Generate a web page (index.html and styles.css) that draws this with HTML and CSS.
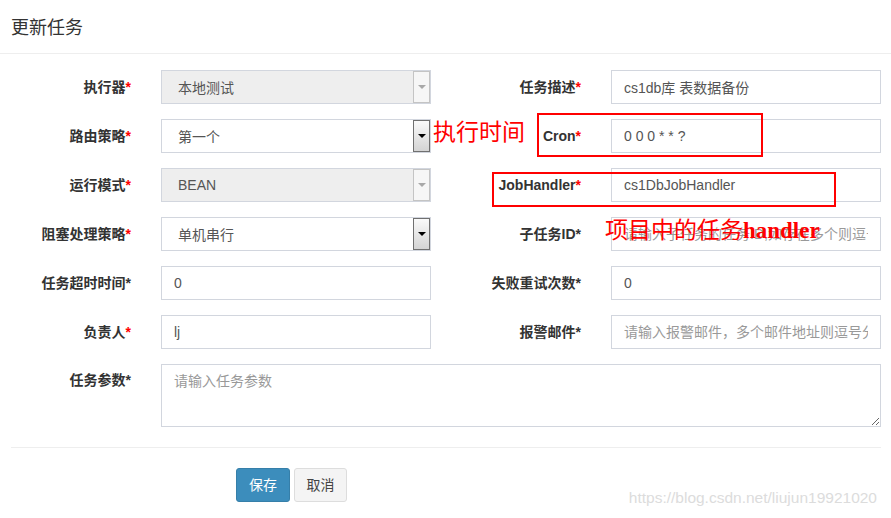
FILE: index.html
```html
<!DOCTYPE html>
<html lang="zh-CN">
<head>
  <meta charset="UTF-8">
  <title>更新任务</title>
  <link rel="stylesheet" href="styles.css">
</head>
<body>
  <div class="modal-header">
    <h4 class="modal-title">更新任务</h4>
  </div>

  <div class="modal-body">
    <form class="update-form">
      <div class="form-group">
        <label>执行器<span class="req">*</span></label>
        <div class="cell">
          <div class="select disabled"><span>本地测试</span><span class="arrow"></span></div>
        </div>
        <label>任务描述<span class="req">*</span></label>
        <div class="cell">
          <input type="text" value="cs1db库 表数据备份">
        </div>
      </div>

      <div class="form-group">
        <label>路由策略<span class="req">*</span></label>
        <div class="cell">
          <div class="select"><span>第一个</span><span class="arrow"></span></div>
        </div>
        <label>Cron<span class="req">*</span></label>
        <div class="cell">
          <input type="text" value="0 0 0 * * ?">
        </div>
      </div>

      <div class="form-group">
        <label>运行模式<span class="req">*</span></label>
        <div class="cell">
          <div class="select disabled"><span>BEAN</span><span class="arrow"></span></div>
        </div>
        <label>JobHandler<span class="req">*</span></label>
        <div class="cell">
          <input type="text" value="cs1DbJobHandler">
        </div>
      </div>

      <div class="form-group">
        <label>阻塞处理策略<span class="req">*</span></label>
        <div class="cell">
          <div class="select"><span>单机串行</span><span class="arrow"></span></div>
        </div>
        <label>子任务ID*</label>
        <div class="cell">
          <input type="text" placeholder="请输入子任务的任务ID,如存在多个则逗号分隔">
        </div>
      </div>

      <div class="form-group">
        <label>任务超时时间*</label>
        <div class="cell">
          <input type="text" value="0">
        </div>
        <label>失败重试次数*</label>
        <div class="cell">
          <input type="text" value="0">
        </div>
      </div>

      <div class="form-group">
        <label>负责人<span class="req">*</span></label>
        <div class="cell">
          <input type="text" value="lj">
        </div>
        <label>报警邮件*</label>
        <div class="cell">
          <input type="text" placeholder="请输入报警邮件，多个邮件地址则逗号分隔">
        </div>
      </div>

      <div class="form-group">
        <label class="top">任务参数*</label>
        <div class="cell wide">
          <textarea placeholder="请输入任务参数"></textarea>
        </div>
      </div>

      <hr>

      <div class="form-actions">
        <button type="button" class="btn btn-primary">保存</button>
        <button type="button" class="btn btn-default">取消</button>
      </div>
    </form>
  </div>

  <!-- annotations drawn on top of the screenshot -->
  <div class="note note-cron">执行时间</div>
  <div class="mark mark-cron"></div>
  <div class="mark mark-handler"></div>
  <div class="note note-handler">项目中的任务<b>handler</b></div>

  <div class="watermark">https://blog.csdn.net/liujun19921020</div>
</body>
</html>
```

FILE: styles.css
```css
body, html {
  margin: 0;
  height: 100%;
  background: #fff;
  overflow: hidden;
  font-family: "Liberation Sans", "Noto Sans CJK SC", sans-serif;
  font-size: 14px;
  color: #333;
}
.modal-header {
  height: 53px;
  display: flex;
  align-items: center;
  padding: 0 11px;
  border-bottom: 1px solid #eee;
}
.modal-title {
  margin: 0 0 2px;
  font-size: 18px;
  font-weight: normal;
  color: #333;
}
.modal-body {
  padding: 16px 10px 0 11px;
}
.form-group {
  display: grid;
  grid-template-columns: 135px 300px 150px 285px;
  margin-bottom: 15px;
}
.form-group label {
  font-weight: bold;
  text-align: right;
  padding-right: 15px;
  line-height: 34px;
  white-space: nowrap;
}
.form-group label.top {
  line-height: 20px;
  padding-top: 6px;
}
.req {
  color: #f00;
}
.cell {
  padding-left: 15px;
}
.cell:nth-of-type(1) {
  padding-right: 15px;
}
.cell.wide {
  grid-column: 2 / 5;
  padding-right: 0;
}
input, textarea {
  display: block;
  box-sizing: border-box;
  width: 100%;
  height: 34px;
  margin: 0;
  padding: 6px 12px;
  border: 1px solid #d2d6de;
  border-radius: 0;
  font-family: inherit;
  font-size: 14px;
  color: #555;
  background: #fff;
  outline: none;
}
input::placeholder, textarea::placeholder {
  color: #999;
}
textarea {
  height: 63px;
  line-height: 20px;
  resize: vertical;
}
.select {
  display: flex;
  align-items: center;
  box-sizing: border-box;
  height: 34px;
  border: 1px solid #d2d6de;
  background: #fff;
  color: #555;
  padding-left: 16px;
}
.select.disabled {
  background: #eee;
}
.select .arrow {
  margin-left: auto;
  box-sizing: border-box;
  width: 17px;
  height: 32px;
  border: 1px solid #707070;
  background: linear-gradient(#fafafa, #d4d4d4);
  display: flex;
  align-items: center;
  justify-content: center;
}
.select .arrow::after {
  content: "";
  border-left: 4px solid transparent;
  border-right: 4px solid transparent;
  border-top: 4px solid #000;
}
.select.disabled .arrow {
  border-color: #c4c4c4;
  background: #f6f6f6;
}
.select.disabled .arrow::after {
  border-top-color: #a8a8a8;
}
hr {
  margin: 20px 0 20px;
  border: 0;
  border-top: 1px solid #eee;
}
.form-actions {
  display: flex;
  gap: 4px;
  padding-left: 225px;
}
.btn {
  box-sizing: border-box;
  height: 34px;
  padding: 6px 0;
  border-radius: 3px;
  font-family: inherit;
  font-size: 14px;
  line-height: 20px;
  white-space: nowrap;
}
.btn-primary {
  width: 54px;
  background: #3c8dbc;
  border: 1px solid #367fa9;
  color: #fff;
}
.btn-default {
  width: 53px;
  background: #f4f4f4;
  border: 1px solid #ddd;
  color: #444;
}

/* red marks added on the screenshot */
.note {
  position: absolute;
  color: #f00;
  font-size: 23px;
  line-height: 24px;
  font-family: "Noto Sans CJK SC", sans-serif;
  white-space: nowrap;
}
.note b {
  font-family: "Liberation Serif", serif;
  font-weight: bold;
}
.note-cron {
  left: 433px;
  top: 118px;
}
.note-handler {
  left: 605px;
  top: 216px;
}
.mark {
  position: absolute;
  border: 2px solid #f00;
  box-sizing: border-box;
}
.mark-cron {
  left: 537px;
  top: 113px;
  width: 226px;
  height: 44px;
}
.mark-handler {
  left: 492px;
  top: 172px;
  width: 344px;
  height: 35px;
}
.watermark {
  position: absolute;
  right: 14px;
  top: 489px;
  font-size: 15.5px;
  color: #dcdcdc;
}
```
